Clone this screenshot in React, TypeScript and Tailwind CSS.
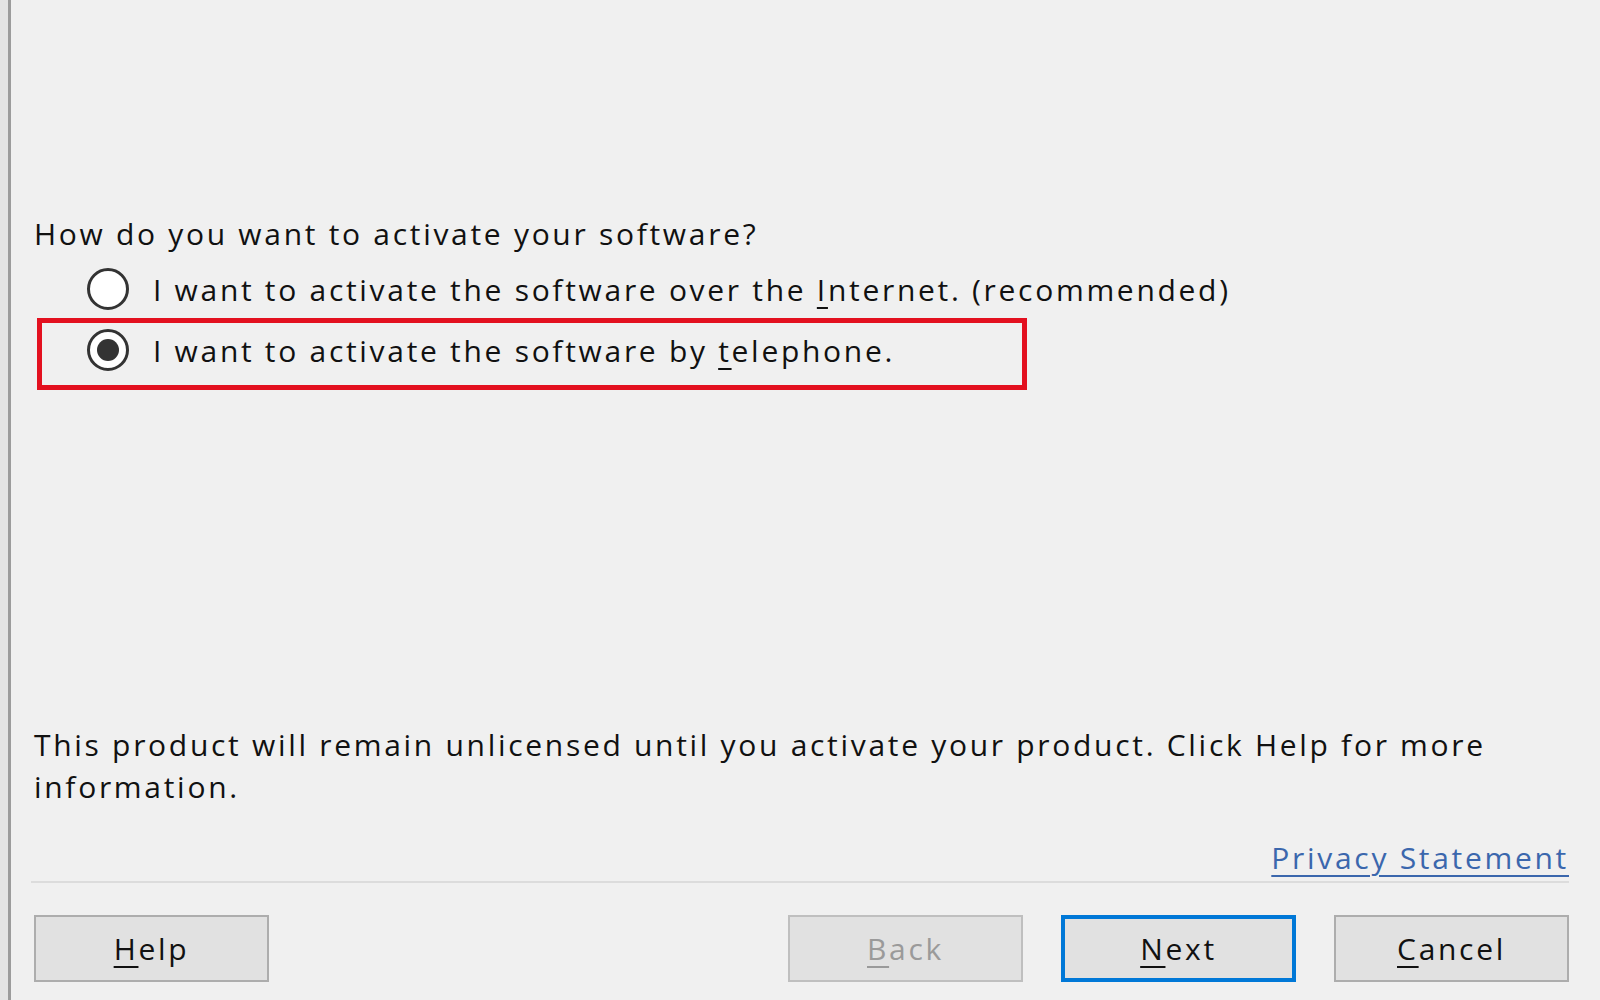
import React from 'react';

const font = { fontFamily: '"Open Sans", "Noto Sans", sans-serif' };

const Radio = ({ checked }: { checked?: boolean }) => (
  <span className="flex h-[42px] w-[42px] shrink-0 items-center justify-center rounded-full border-[3px] border-[#333333] bg-white">
    {checked && <span className="h-[22px] w-[22px] rounded-full bg-[#333333]" />}
  </span>
);

const Key = ({ children }: { children: React.ReactNode }) => (
  <span className="underline decoration-[2px] underline-offset-[6px]">{children}</span>
);

const Button = ({
  children,
  variant = 'normal',
}: {
  children: React.ReactNode;
  variant?: 'normal' | 'default' | 'disabled';
}) => {
  const styles = {
    normal: 'border-[2px] border-[#adadad] text-[#111111]',
    default: 'border-[4px] border-[#0078d7] text-[#111111]',
    disabled: 'border-[2px] border-[#bfbfbf] text-[#9a9a9a]',
  }[variant];
  return (
    <div className={`flex h-[67px] w-[235px] items-center justify-center bg-[#e1e1e1] text-[30px] ${styles}`}>
      {children}
    </div>
  );
};

export default function App() {
  return (
    <div
      className="flex h-[1000px] w-[1600px] overflow-hidden bg-[#f0f0f0] font-medium tracking-[2.7px] text-[#111111]"
      style={font}
    >
      <div className="w-[8px] bg-[#e4e4e4]" />
      <div className="w-[3px] bg-[#9c9c9c]" />
      <div className="flex flex-1 flex-col pl-[23px] pr-[31px] pt-[214px]">
        <div className="h-[40px] text-[30px] leading-[40px]">How do you want to activate your software?</div>

        <div className="mt-[5px] flex h-[60px] items-center gap-[24px] pl-[53px] text-[30px]">
          <Radio />
          <span>
            I want to activate the software over the <Key>I</Key>nternet. (recommended)
          </span>
        </div>

        <div className="-mt-[1px] ml-[3px] h-[72px] w-[990px] border-[5px] border-[#e3101f]">
          <div className="flex h-[62px] items-center gap-[24px] pb-[8px] pl-[45px] text-[30px]">
            <Radio checked />
            <span>
              I want to activate the software by <Key>t</Key>elephone.
            </span>
          </div>
        </div>

        <p className="mt-[334px] text-[30px] leading-[42px]">
          This product will remain unlicensed until you activate your product. Click Help for more information.
        </p>

        <div className="mt-[30px] flex h-[40px] justify-end text-[30px] leading-[40px]">
          <span className="text-[#3b67ad] underline decoration-[2px] underline-offset-[6px]">Privacy Statement</span>
        </div>

        <div className="-ml-[3px] mt-[3px] h-[2px] bg-[#dcdcdc]" />

        <div className="mt-[32px] flex justify-between">
          <Button>
            <Key>H</Key>elp
          </Button>
          <div className="flex gap-[38px]">
            <Button variant="disabled">
              <Key>B</Key>ack
            </Button>
            <Button variant="default">
              <Key>N</Key>ext
            </Button>
            <Button>
              <Key>C</Key>ancel
            </Button>
          </div>
        </div>
      </div>
    </div>
  );
}
